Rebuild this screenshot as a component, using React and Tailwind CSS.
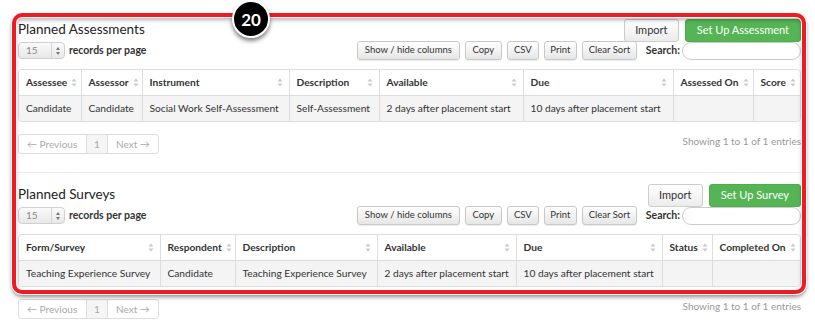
import React from "react";

const font = { fontFamily: "Lato, 'Open Sans', 'Liberation Sans', sans-serif" };

function SortIcon() {
  return (
    <svg width="6" height="9" viewBox="0 0 6 9" className="shrink-0">
      <path d="M3 0.5 L5.5 3.5 L0.5 3.5 Z" fill="#c9c9c9" />
      <path d="M3 8.5 L5.5 5.5 L0.5 5.5 Z" fill="#c9c9c9" />
    </svg>
  );
}

function Btn({ children, className = "" }) {
  return (
    <div
      className={`flex shrink-0 items-center justify-center whitespace-nowrap h-[19px] rounded-[3px] border border-[#c8c8c8] bg-gradient-to-b from-white to-[#e6e6e6] text-[9.5px] text-[#333] shadow-[0_1px_1px_rgba(0,0,0,0.08)] ${className}`}
    >
      {children}
    </div>
  );
}

function Controls() {
  return (
    <div className="flex items-center justify-between h-[19px]">
      <div className="flex items-center gap-[4px]">
        <div className="flex items-center w-[47px] h-[17px] rounded-[4px] border border-[#d0d0d0] bg-gradient-to-b from-[#fafafa] to-[#e8e8e8]">
          <span className="flex-1 pl-[7px] text-[10px] text-[#888]">15</span>
          <div className="h-full w-px bg-[#d5d5d5]" />
          <svg width="12" height="10" viewBox="0 0 12 10">
            <path d="M6 1 L8 4 L4 4 Z" fill="#777" />
            <path d="M6 9 L8 6 L4 6 Z" fill="#777" />
          </svg>
        </div>
        <span className="text-[10.5px] font-bold text-[#333]">records per page</span>
      </div>
      <div className="flex items-center gap-[5px]">
        <Btn className="w-[103px]">Show / hide columns</Btn>
        <Btn className="w-[37px]">Copy</Btn>
        <Btn className="w-[32px]">CSV</Btn>
        <Btn className="w-[33px]">Print</Btn>
        <Btn className="w-[55px]">Clear Sort</Btn>
        <span className="ml-[4px] text-[10.5px] font-bold text-[#333]">Search:</span>
        <div className="-ml-[3px] w-[119px] h-[18px] rounded-full border border-[#ccc] bg-white" />
      </div>
    </div>
  );
}

function DataTable({ cols, row }) {
  return (
    <div className="mt-[9px] rounded-[4px] border border-[#ddd] overflow-hidden">
      <table className="w-full table-fixed border-collapse text-[10.2px] text-[#333]">
        <colgroup>
          {cols.map((c) => (
            <col key={c.name} style={{ width: c.w }} />
          ))}
        </colgroup>
        <thead>
          <tr className="h-[25px] bg-white">
            {cols.map((c, i) => (
              <th
                key={c.name}
                className={`pl-[7px] pr-[6px] text-left font-bold ${i > 0 ? "border-l border-[#ddd]" : ""}`}
              >
                <div className="flex items-center justify-between gap-1">
                  <span className="whitespace-nowrap">{c.name}</span>
                  <SortIcon />
                </div>
              </th>
            ))}
          </tr>
        </thead>
        <tbody>
          <tr className="h-[26px] bg-[#f4f4f4] border-t border-[#ddd]">
            {row.map((v, i) => (
              <td
                key={i}
                className={`px-[7px] whitespace-nowrap ${i > 0 ? "border-l border-[#ddd]" : ""}`}
              >
                {v}
              </td>
            ))}
          </tr>
        </tbody>
      </table>
    </div>
  );
}

function Footer() {
  return (
    <div className="mt-[12px] flex items-center justify-between h-[20px]">
      <div className="flex h-[20px] rounded-[3px] border border-[#ddd] text-[10px] text-[#aaa] overflow-hidden">
        <div className="flex items-center px-[8px] w-[67px]">← Previous</div>
        <div className="flex items-center justify-center w-[22px] border-l border-r border-[#ddd] bg-[#f5f5f5]">1</div>
        <div className="flex items-center px-[8px]">Next →</div>
      </div>
      <span className="text-[10px] text-[#999] -mt-[6px]">Showing 1 to 1 of 1 entries</span>
    </div>
  );
}

function Section({ title, action, cols, row }) {
  return (
    <div>
      <div className="flex items-start justify-between h-[22px]">
        <h2 className="mt-[2px] text-[13.5px] leading-[17px] text-[#222]">{title}</h2>
        <div className="flex gap-[6px]">
          <div className="flex items-center justify-center h-[23px] w-[55px] rounded-[3px] border border-[#ccc] bg-gradient-to-b from-white to-[#ececec] text-[11px] text-[#333]">
            Import
          </div>
          <div className="flex items-center justify-center h-[23px] px-[11px] rounded-[3px] border border-[#4cae4c] bg-[#55b555] text-[11px] text-white">
            {action}
          </div>
        </div>
      </div>
      <Controls />
      <DataTable cols={cols} row={row} />
      <Footer />
    </div>
  );
}

export default function App() {
  const cols1 = [
    { name: "Assessee", w: 62 },
    { name: "Assessor", w: 61 },
    { name: "Instrument", w: 147 },
    { name: "Description", w: 90 },
    { name: "Available", w: 144 },
    { name: "Due", w: 150 },
    { name: "Assessed On", w: 80 },
    { name: "Score", w: 49 },
  ];
  const row1 = [
    "Candidate",
    "Candidate",
    "Social Work Self-Assessment",
    "Self-Assessment",
    "2 days after placement start",
    "10 days after placement start",
    "",
    "",
  ];
  const cols2 = [
    { name: "Form/Survey", w: 141 },
    { name: "Respondent", w: 75 },
    { name: "Description", w: 142 },
    { name: "Available", w: 139 },
    { name: "Due", w: 146 },
    { name: "Status", w: 50 },
    { name: "Completed On", w: 90 },
  ];
  const row2 = [
    "Teaching Experience Survey",
    "Candidate",
    "Teaching Experience Survey",
    "2 days after placement start",
    "10 days after placement start",
    "",
    "",
  ];

  return (
    <div className="relative w-[815px] h-[327px] overflow-hidden bg-white" style={font}>
      <div className="pl-[18px] pr-[14px] pt-[19px]">
        <Section title="Planned Assessments" action="Set Up Assessment" cols={cols1} row={row1} />
        <div className="mt-[18px] -ml-[2px] h-px bg-[#ececec]" />
        <div className="pt-[11px]">
          <Section title="Planned Surveys" action="Set Up Survey" cols={cols2} row={row2} />
        </div>
      </div>

      {/* annotation frame */}
      <div className="pointer-events-none absolute left-[12px] top-[13px] w-[794px] h-[281px] rounded-[10px] border-4 border-[#ee1b24] shadow-[0_0_0_1px_rgba(255,255,255,0.9),0_3px_4px_rgba(0,0,0,0.45),inset_0_0_0_1px_rgba(255,255,255,0.9),inset_0_3px_4px_rgba(0,0,0,0.3)]" />
      {/* badge */}
      <div className="pointer-events-none absolute left-[232px] top-[0px] w-[38px] h-[38px] rounded-full bg-black border-2 border-white shadow-[0_3px_4px_rgba(0,0,0,0.5)] flex items-center justify-center">
        <span className="text-white font-bold text-[17px] leading-none" style={{ fontFamily: "Lato, 'Liberation Sans', sans-serif" }}>20</span>
      </div>
    </div>
  );
}
